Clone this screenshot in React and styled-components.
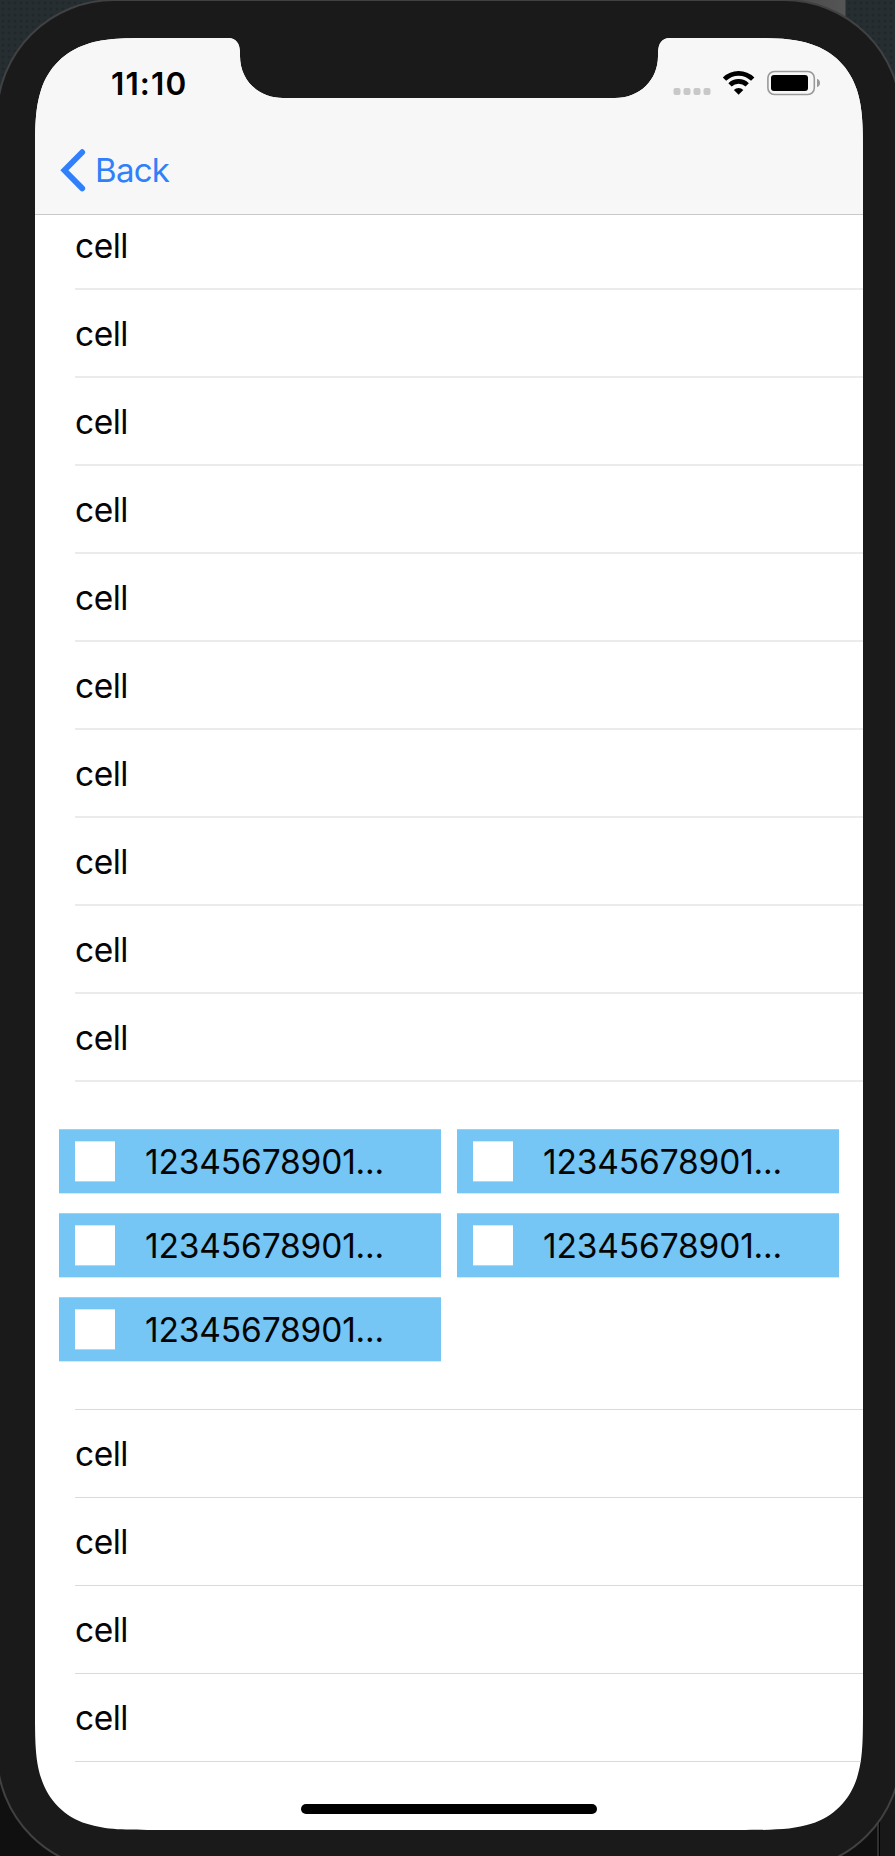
import React from "react";
import styled, { createGlobalStyle } from "styled-components";

const GlobalStyle = createGlobalStyle`
  * { box-sizing: border-box; }
  body {
    margin: 0;
    overflow: hidden;
    font-family: Inter, "Liberation Sans", sans-serif;
  }
`;

const Desktop = styled.div`
  height: 1856px;
  width: 895px;
  overflow: hidden;
  background:
    linear-gradient(90deg, #101010 877px, #303030 877px, #303030 879px, #000 879px, #000 880px, #181818 880px) 0 1700px no-repeat,
    linear-gradient(90deg, transparent 700px, #484848 780px, #555 845px, transparent 846px) 0 0 / 895px 40px no-repeat,
    radial-gradient(circle, #20282c 1.2px, transparent 1.8px) 0 0 / 6px 6px,
    #272e31;
`;

const Device = styled.div`
  width: 906px;
  height: 1872px;
  margin: -1px 0 0 -4px;
  padding: 37px;
  border: 2px solid #404142;
  border-radius: 118px;
  background: #1a1a1a;
`;

/* Continuous-curvature screen outline with the sensor notch cut from its top edge. */
const R = 82;
const k = (n) => n * R;
const W = 828;
const H = 1792;
const A = k(1.528665), B = k(1.088493), C = k(0.868407), D = k(0.631494);
const E = k(0.074911), F = k(0.362), G = k(0.161);
const screenPath = [
  `M${A} 0`,
  "H193 C201 0 205 5 205 16 V18 C205 42 223 60 248 60",
  "H580 C605 60 623 42 623 18 V16 C623 5 627 0 635 0",
  `H${W - A} C${W - B} 0 ${W - C} 0 ${W - D} ${E} C${W - F} ${G} ${W - G} ${F} ${W - E} ${D} C${W} ${C} ${W} ${B} ${W} ${A}`,
  `V${H - A} C${W} ${H - B} ${W} ${H - C} ${W - E} ${H - D} C${W - G} ${H - F} ${W - F} ${H - G} ${W - D} ${H - E} C${W - C} ${H} ${W - B} ${H} ${W - A} ${H}`,
  `H${A} C${B} ${H} ${C} ${H} ${D} ${H - E} C${F} ${H - G} ${G} ${H - F} ${E} ${H - D} C0 ${H - C} 0 ${H - B} 0 ${H - A}`,
  `V${A} C0 ${B} 0 ${C} ${E} ${D} C${G} ${F} ${F} ${G} ${D} ${E} C${C} 0 ${B} 0 ${A} 0 Z`,
].join(" ");

const Screen = styled.div`
  position: relative;
  display: flex;
  flex-direction: column;
  width: 828px;
  height: 1792px;
  background: #fff;
  clip-path: path("${screenPath}");
`;

const Header = styled.header`
  flex: none;
  height: 177px;
  background: #f7f7f7;
  border-bottom: 1px solid #c9c9c9;
`;

const StatusBar = styled.div`
  display: flex;
  justify-content: space-between;
  height: 88px;
  padding: 30px 43px 0 76px;
`;

const Time = styled.span`
  font-size: 31.5px;
  font-weight: 600;
  line-height: 32px;
  letter-spacing: 1.1px;
  color: #000;
`;

const StatusIcons = styled.svg`
  width: 150px;
  height: 32px;
`;

const BackButton = styled.button`
  display: flex;
  align-items: center;
  gap: 9px;
  height: 88px;
  padding: 0 0 0 25px;
  border: 0;
  background: none;
  color: #2f80fa;
  font: 400 33px/40px Inter, "Liberation Sans", sans-serif;
  letter-spacing: -0.7px;
`;

const Chevron = styled.svg`
  width: 26px;
  height: 44px;
`;

const List = styled.main`
  flex: 1;
  overflow: hidden;
`;

const Rows = styled.div`
  margin-top: ${(p) => (p.$scrolled ? "-13px" : "0")};
`;

const Cell = styled.div`
  display: flex;
  align-items: center;
  height: 88px;
  margin-left: 40px;
  padding-top: ${(p) => (p.$thin ? "1px" : "2px")};
  border-bottom: ${(p) => (p.$thin ? "1px solid #dadada" : "2px solid #ebebeb")};
  font-size: 33.5px;
  line-height: 40px;
  letter-spacing: -0.5px;
  color: #050505;
`;

const TagSection = styled.section`
  height: 328px;
  padding: 47px 24px 0;
  background: linear-gradient(#dadada, #dadada) 40px 100% / 100% 1px no-repeat;
`;

const TagGrid = styled.div`
  display: grid;
  grid-template-columns: 382px 382px;
  grid-auto-rows: 64px;
  gap: 20px 16px;
`;

const Tag = styled.div`
  display: flex;
  align-items: center;
  gap: 30px;
  padding: 0 16px;
  background: #75c5f5;
  box-shadow: inset 0 1px #98d3f7, 0 1px #d0ebfb;
`;

const Box = styled.span`
  width: 40px;
  height: 40px;
  background: #fff;
  box-shadow: inset 0 1px #d0ebfb, 0 1px #a6daf8;
`;

const TagLabel = styled.span`
  padding-top: 2px;
  font-size: 33.5px;
  line-height: 40px;
  letter-spacing: -0.15px;
  color: #050505;
  white-space: nowrap;
`;

const HomeIndicator = styled.div`
  position: absolute;
  left: 266px;
  bottom: 16px;
  width: 296px;
  height: 10px;
  border-radius: 5px;
  background: #000;
`;

function Status() {
  return (
    <StatusIcons viewBox="670 68 150 32">
      {[673.5, 683.5, 693.5, 703.5].map((x) => (
        <rect key={x} x={x} y="88" width="7" height="7" rx="2" fill="#c8c8c8" />
      ))}
      <g fill="none" stroke="#000" strokeWidth="4.7">
        <path d="M724.5 79.2 A20 20 0 0 1 752.7 79.2" />
        <path d="M730 84.9 A12.3 12.3 0 0 1 747.2 84.9" />
      </g>
      <path d="M738.6 94.8 L733.9 89.9 A6.8 6.8 0 0 1 743.3 89.9 Z" />
      <rect x="767.9" y="71.5" width="46.4" height="23" rx="6.5" fill="none" stroke="#9a9a9a" strokeWidth="1.6" />
      <rect x="771" y="75" width="37" height="16" rx="3" />
      <path d="M817 78.8 Q820 80 820 83 Q820 86 817 87.2 Z" fill="#9a9a9a" />
    </StatusIcons>
  );
}

const range = (n) => Array.from({ length: n }, (_, i) => i);

export default function App() {
  return (
    <Desktop>
      <GlobalStyle />
      <Device>
        <Screen>
          <Header>
            <StatusBar>
              <Time>11:10</Time>
              <Status />
            </StatusBar>
            <BackButton>
              <Chevron viewBox="60 148 26 44">
                <path d="M82.2 152.2 L64.4 170.3 L82.2 188.4" fill="none" stroke="currentColor" strokeWidth="5.8" strokeLinecap="round" strokeLinejoin="miter" />
              </Chevron>
              Back
            </BackButton>
          </Header>
          <List>
            <Rows $scrolled>
              {range(10).map((i) => <Cell key={i}>cell</Cell>)}
            </Rows>
            <TagSection>
              <TagGrid>
                {range(5).map((i) => (
                  <Tag key={i}>
                    <Box />
                    <TagLabel>12345678901...</TagLabel>
                  </Tag>
                ))}
              </TagGrid>
            </TagSection>
            <Rows>
              {range(4).map((i) => <Cell key={i} $thin>cell</Cell>)}
            </Rows>
          </List>
          <HomeIndicator />
        </Screen>
      </Device>
    </Desktop>
  );
}
